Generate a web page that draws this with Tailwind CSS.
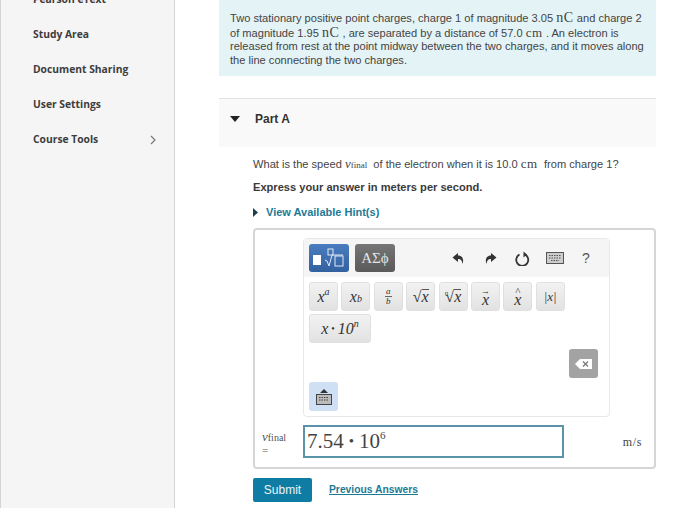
<!DOCTYPE html>
<html lang="en">
<head>
  <meta charset="UTF-8">
  <title>Part A</title>
  <script src="https://cdn.jsdelivr.net/npm/@tailwindcss/browser@4"></script>
</head>
<body class="bg-white overflow-hidden font-['Liberation_Sans',sans-serif] text-[#3a3a3a]">
  <div class="flex h-[508px] w-[700px] overflow-hidden">

    <!-- sidebar -->
    <nav class="w-[175px] shrink-0 h-[526px] bg-[#f5f5f5] border-l border-r border-[#d4d4d4] font-['Open_Sans',sans-serif] font-bold text-[10.3px] text-[#3d3d3d] pl-[32px] pr-[18px] -mt-[18px]">
      <div class="h-[35px] flex items-center">Pearson eText</div>
      <div class="h-[35px] flex items-center">Study Area</div>
      <div class="h-[35px] flex items-center">Document Sharing</div>
      <div class="h-[35px] flex items-center">User Settings</div>
      <div class="h-[35px] flex items-center justify-between">
        <span>Course Tools</span>
        <svg width="6" height="10" viewBox="0 0 6 10" fill="none" stroke="#777" stroke-width="1.2"><path d="M1 1l4 4-4 4"/></svg>
      </div>
    </nav>

    <!-- main column -->
    <main class="w-[437px] ml-[44px] shrink-0">
      <div class="h-[76px] bg-[#e4f3f6] pl-[11px] pr-[6px] pt-[11px] text-[11.1px] leading-[13.6px] text-[#444]">
        Two stationary positive point charges, charge 1 of magnitude 3.05 <span class="font-['Liberation_Serif',serif] text-[14px] tracking-[0.6px]">nC</span> and charge 2 of magnitude 1.95 <span class="font-['Liberation_Serif',serif] text-[14px] tracking-[0.6px]">nC</span> , are separated by a distance of 57.0 <span class="font-['Liberation_Serif',serif] text-[13px] tracking-[0.6px]">cm</span> . An electron is released from rest at the point midway between the two charges, and it moves along the line connecting the two charges.
      </div>

      <div class="mt-[22px] h-[49px] bg-[#f9f9f9] border-t border-[#e2e2e2] flex items-center pb-[9px] font-bold text-[12px] text-[#333]">
        <svg class="ml-[11px]" width="10" height="6" viewBox="0 0 10 6" fill="#222"><path d="M0 0h10L5 6z"/></svg>
        <span class="ml-[15px]">Part A</span>
      </div>

      <div class="pl-[34px]">
        <p class="mt-[9px] h-[16px] text-[11.1px] leading-[16px] text-[#444] whitespace-nowrap">What is the speed <span class="font-['Liberation_Serif',serif] italic text-[13px]">v</span><span class="font-['Liberation_Serif',serif] text-[9px]">final</span> &nbsp;of the electron when it is 10.0 <span class="font-['Liberation_Serif',serif] text-[13px] tracking-[0.6px]">cm</span> &nbsp;from charge 1?</p>
        <p class="mt-[7px] h-[16px] text-[11.1px] leading-[16px] font-bold text-[#3a3a3a]">Express your answer in meters per second.</p>
        <div class="mt-[9px] h-[16px] flex items-center text-[11px] font-bold text-[#1d7a96]">
          <svg width="5" height="9" viewBox="0 0 5 9" fill="#1f3d4d"><path d="M0 0l5 4.5L0 9z"/></svg>
          <span class="ml-[8px]">View Available Hint(s)</span>
        </div>

        <!-- answer box -->
        <div class="mt-[8px] w-[403px] h-[241px] border-2 border-[#d6d6d6] rounded-[4px] pt-[8px]">
          <div class="ml-[48px] w-[307px] h-[179px] border border-[#e8e8e8] rounded-[4px] flex flex-col relative">
            <div class="h-[38px] bg-[#f5f5f5] flex items-center pl-[5px]">
              <div class="w-[40px] h-[28px] rounded-[3px] bg-linear-to-b from-[#4a7cc0] to-[#32619f] flex items-center justify-center gap-[2px]">
                <div class="w-[8px] h-[10px] bg-white mt-[4px]"></div>
                <svg width="22" height="22" viewBox="0 0 22 22" fill="none" stroke="#dfe9f5" stroke-width="1"><rect x="5" y="2" width="5" height="6"/><rect x="12" y="9" width="8" height="10"/><path d="M2 13l2 1 2 5 3-11h11"/></svg>
              </div>
              <div class="ml-[6px] w-[40px] h-[28px] rounded-[3px] bg-linear-to-b from-[#767676] to-[#5a5a5a] text-[#e4e4e4] font-['Liberation_Serif',serif] text-[15px] flex items-center justify-center">ΑΣϕ</div>
              <svg class="ml-[57px]" width="13" height="13" viewBox="0 0 13 13" fill="#333"><path d="M6 1L0.5 5.5 6 10V7c2.5 0 4 1 4.5 5 1.5-4 0.5-8.5-4.5-8.5z"/></svg>
              <svg class="ml-[19px]" width="13" height="13" viewBox="0 0 13 13" fill="#333"><path d="M7 1l5.5 4.5L7 10V7c-2.500 0-4 1-4.500 5C1 8 2 3.500 7 3.500z"/></svg>
              <svg class="ml-[18px]" width="15" height="15" viewBox="0 0 15 15" fill="none" stroke="#333" stroke-width="1.8"><path d="M4.500 3.500a6 6 0 1 0 5.500 0"/><path d="M8.500 0.500v6l3.500-3z" fill="#333" stroke="none"/></svg>
              <svg class="ml-[16px]" width="18" height="12" viewBox="0 0 18 12" fill="#ccc" stroke="#555"><rect x="0.500" y="0.500" width="17" height="11"/><path d="M3 3.500h12M3 6h12M5 8.500h8" stroke-dasharray="1.500 1"/></svg>
              <span class="ml-[18px] text-[14px] text-[#555]">?</span>
            </div>

            <div class="pl-[5px] pt-[5px] flex gap-[3.4px] font-['Liberation_Serif',serif] italic text-[16px] text-[#333]">
              <div class="w-[29px] h-[29px] rounded-[3px] border border-[#e0e0e0] bg-linear-to-b from-[#f2f2f2] to-[#e2e2e2] flex items-center justify-center">x<sup class="text-[10px]">a</sup></div>
              <div class="w-[29px] h-[29px] rounded-[3px] border border-[#e0e0e0] bg-linear-to-b from-[#f2f2f2] to-[#e2e2e2] flex items-center justify-center">x<sub class="text-[10px]">b</sub></div>
              <div class="w-[29px] h-[29px] rounded-[3px] border border-[#e0e0e0] bg-linear-to-b from-[#f2f2f2] to-[#e2e2e2] flex flex-col items-center justify-center text-[9px] leading-[9px]"><span class="border-b border-[#666] px-[1px]">a</span><span>b</span></div>
              <div class="w-[29px] h-[29px] rounded-[3px] border border-[#e0e0e0] bg-linear-to-b from-[#f2f2f2] to-[#e2e2e2] flex items-center justify-center not-italic">√<span class="italic border-t border-[#555] leading-[14px]">x</span></div>
              <div class="w-[29px] h-[29px] rounded-[3px] border border-[#e0e0e0] bg-linear-to-b from-[#f2f2f2] to-[#e2e2e2] flex items-center justify-center not-italic"><sup class="text-[7px] italic -mr-[3px]">n</sup>√<span class="italic border-t border-[#555] leading-[14px]">x</span></div>
              <div class="w-[29px] h-[29px] rounded-[3px] border border-[#e0e0e0] bg-linear-to-b from-[#f2f2f2] to-[#e2e2e2] flex flex-col items-center justify-center leading-[11px]"><span class="not-italic text-[9px] leading-[6px]">→</span>x</div>
              <div class="w-[29px] h-[29px] rounded-[3px] border border-[#e0e0e0] bg-linear-to-b from-[#f2f2f2] to-[#e2e2e2] flex flex-col items-center justify-center leading-[11px]"><span class="not-italic text-[11px] leading-[6px]">^</span>x</div>
              <div class="w-[29px] h-[29px] rounded-[3px] border border-[#e0e0e0] bg-linear-to-b from-[#f2f2f2] to-[#e2e2e2] flex items-center justify-center text-[13px]">|x|</div>
            </div>
            <div class="pl-[5px] pt-[3px] font-['Liberation_Serif',serif] italic text-[16px] text-[#333]">
              <div class="w-[62px] h-[29px] rounded-[3px] border border-[#e0e0e0] bg-linear-to-b from-[#f2f2f2] to-[#e2e2e2] flex items-center justify-center">x<span class="text-[10px] mx-[3px] not-italic">•</span>10<sup class="text-[10px]">n</sup></div>
            </div>
            <div class="self-end mt-[6px] mr-[11px] w-[29px] h-[29px] rounded-[3px] bg-[#a3a3a3] flex items-center justify-center">
              <svg width="17" height="10" viewBox="0 0 17 10" fill="#fff"><path d="M5 0h12v10H5L0 5z"/><path d="M8 2.500l5 5M13 2.500l-5 5" stroke="#777" stroke-width="1.200"/></svg>
            </div>
            <div class="ml-[5px] mt-[4px] w-[29px] h-[29px] rounded-[3px] bg-[#cfe0f5] flex flex-col items-center justify-center gap-[1px]">
              <svg width="8" height="4" viewBox="0 0 8 4" fill="#333"><path d="M4 0l4 4H0z"/></svg>
              <svg width="16" height="11" viewBox="0 0 16 11" fill="#bbb" stroke="#444"><rect x="0.500" y="0.500" width="15" height="10"/><path d="M3 3.500h10M3 6h10" stroke-dasharray="1.500 1"/></svg>
            </div>
          </div>

          <div class="mt-[8px] flex items-start">
            <div class="w-[48px] pl-[7px] pt-[4px] font-['Liberation_Serif',serif] text-[#555] leading-[14px]">
              <span class="italic text-[13px]">v</span><span class="text-[10px]">final</span><div class="text-[11px] -mt-[2px]">=</div>
            </div>
            <div class="w-[261px] h-[33px] border-2 border-[#5b93a8] flex items-center pl-[2px] font-['Liberation_Serif',serif] text-[21px] text-[#444]">7.54<span class="text-[15px] mx-[5px]">•</span>10<sup class="text-[11px] -mt-[3px]">6</sup></div>
            <div class="ml-auto pr-[12px] pt-[8px] font-['Liberation_Serif',serif] text-[12px] tracking-[0.6px] text-[#444]">m/s</div>
          </div>
        </div>

        <div class="mt-[9px] flex items-center">
          <div class="w-[59px] h-[24px] rounded-[2px] bg-[#0f7da3] text-[#e8f4f8] text-[12px] flex items-center justify-center">Submit</div>
          <span class="ml-[17px] text-[10.3px] font-bold text-[#1d7a96] underline">Previous Answers</span>
        </div>
      </div>
    </main>
  </div>
</body>
</html>
